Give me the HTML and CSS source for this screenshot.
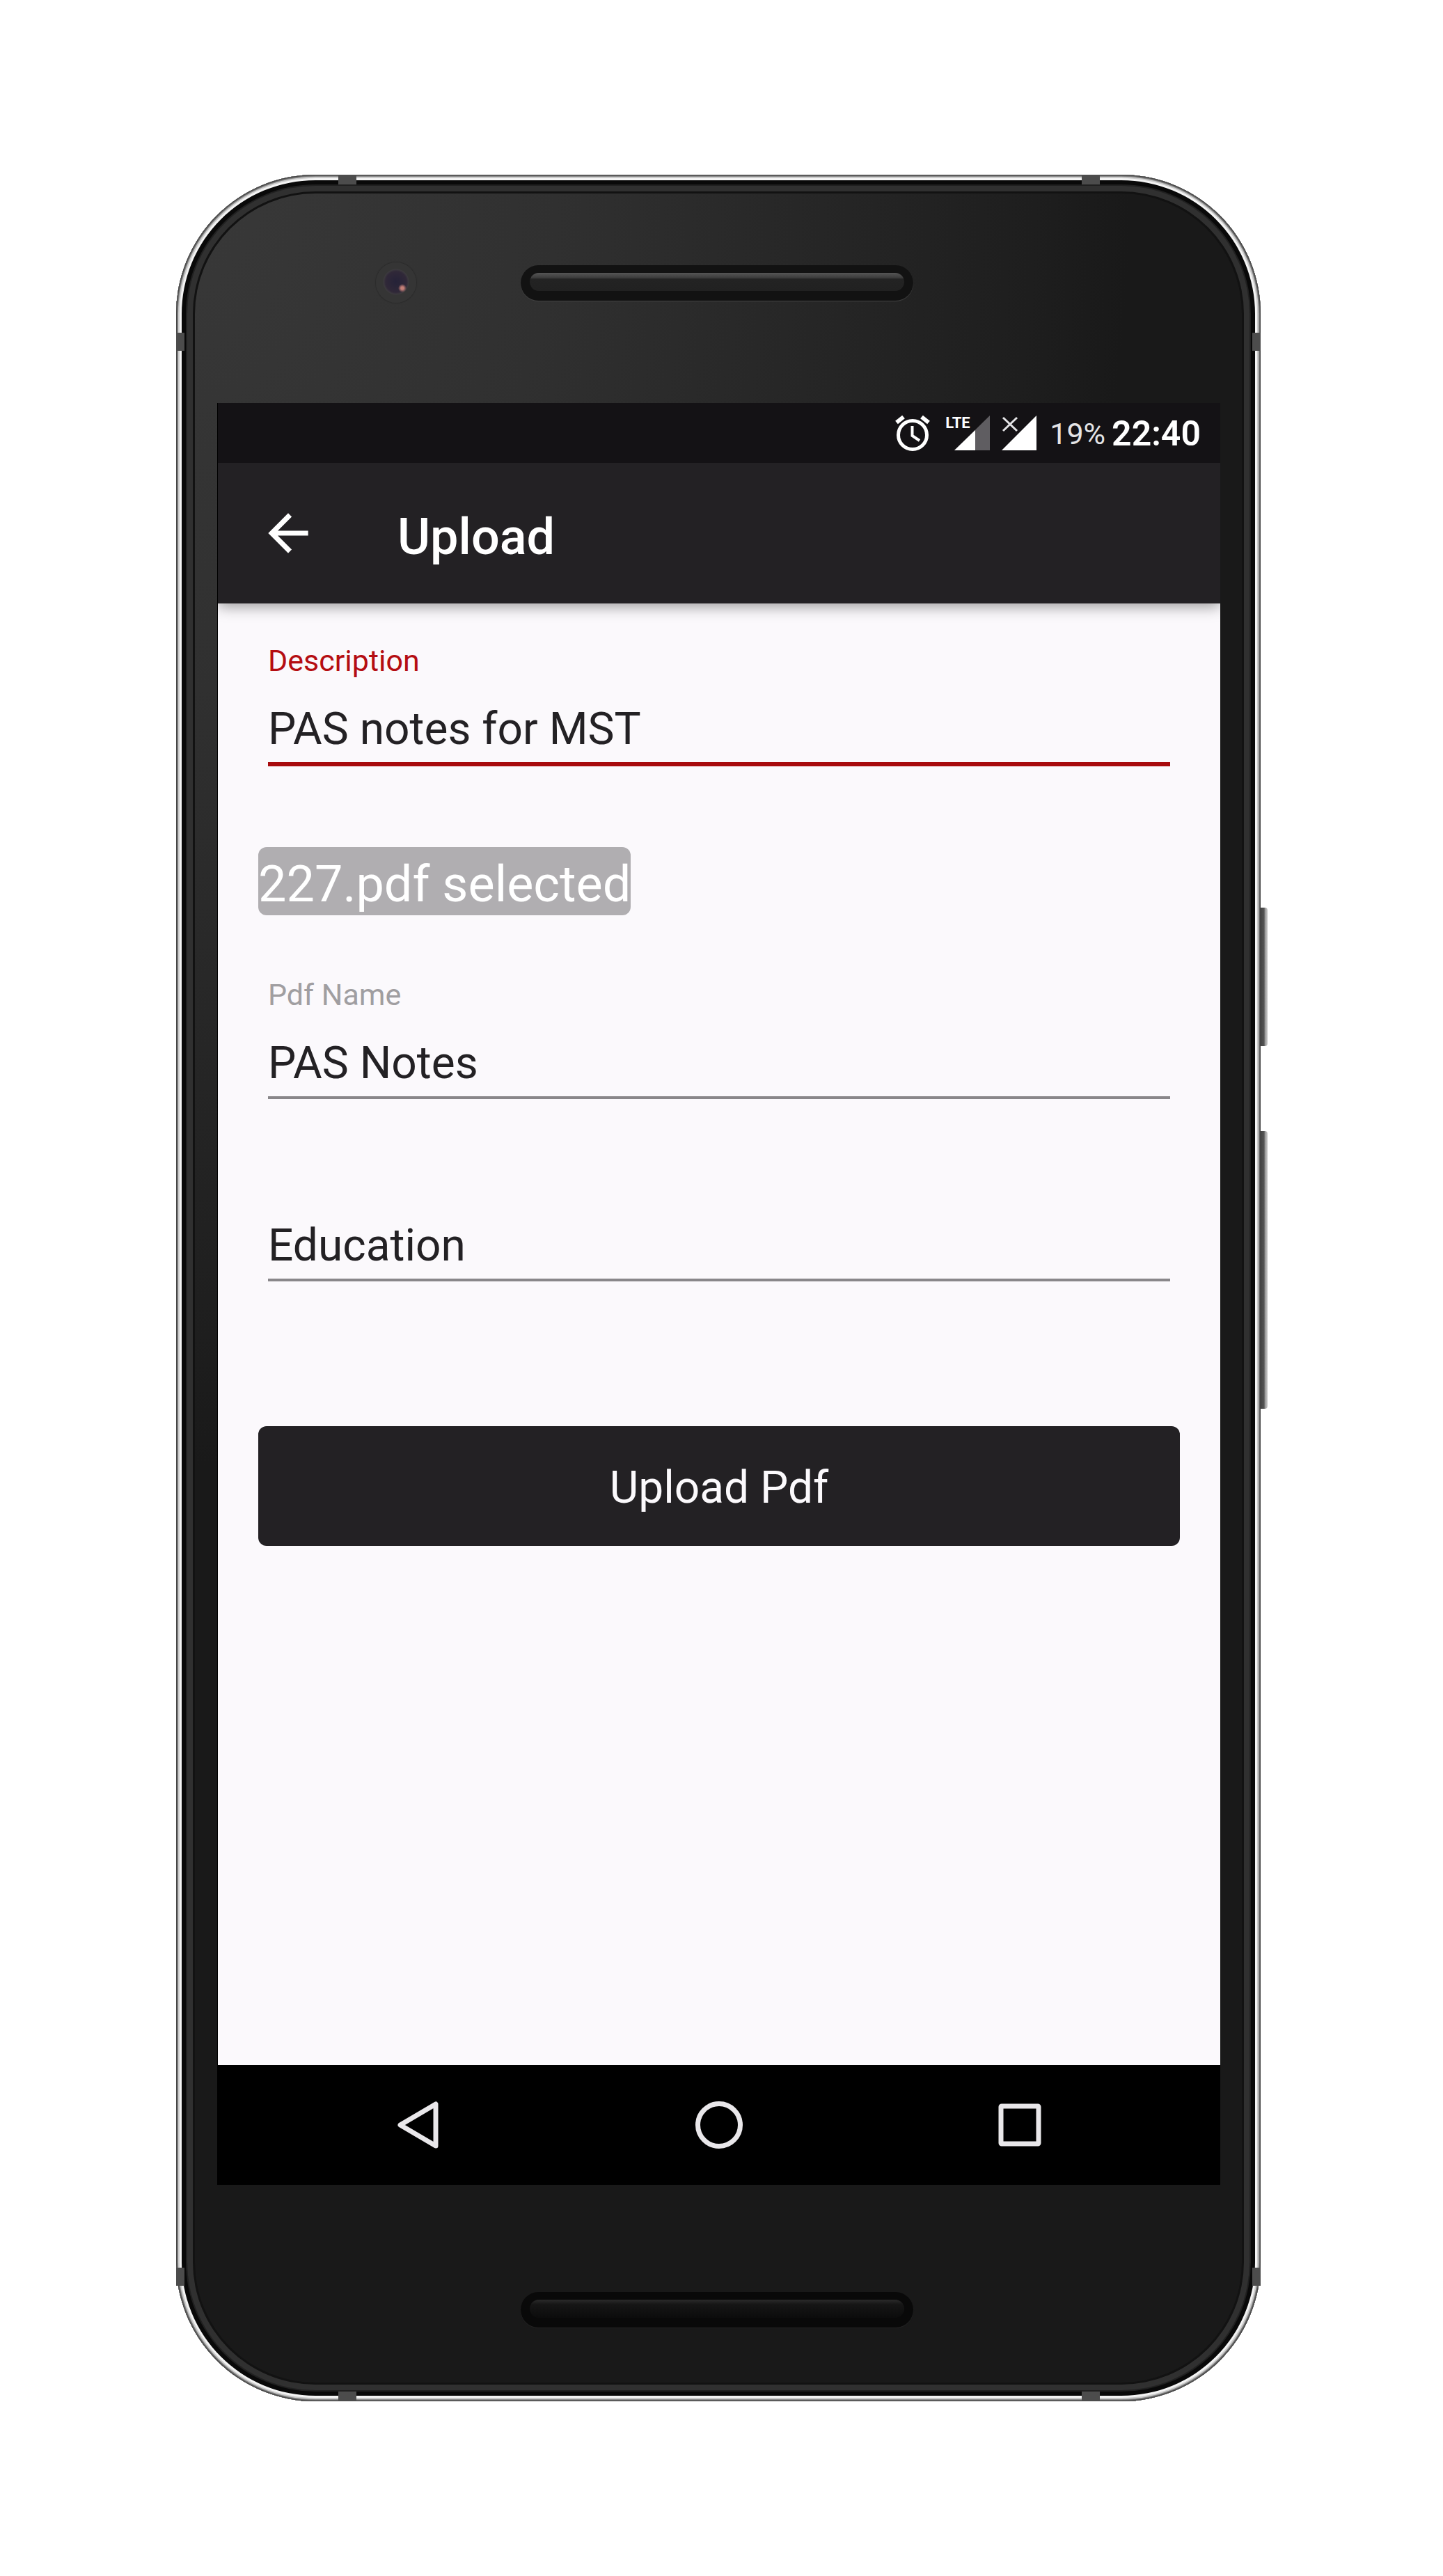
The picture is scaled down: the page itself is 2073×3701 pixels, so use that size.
FILE: index.html
```html
<!DOCTYPE html>
<html lang="en">
<head>
<meta charset="utf-8">
<meta name="viewport" content="width=device-width, initial-scale=1">
<title>Upload</title>
<link rel="stylesheet" href="styles.css">
</head>
<body>
<div class="device">
  <span class="band band-top band-start"></span>
  <span class="band band-top band-end"></span>
  <span class="band band-bottom band-start"></span>
  <span class="band band-bottom band-end"></span>
  <span class="band-side side-left side-upper"></span>
  <span class="band-side side-right side-upper"></span>
  <span class="band-side side-left side-lower"></span>
  <span class="band-side side-right side-lower"></span>
  <span class="key key-power"></span>
  <span class="key key-volume"></span>

  <div class="bezel bezel-top">
    <span class="camera"></span>
    <div class="speaker"><div class="speaker-bar"></div></div>
  </div>

  <div class="screen">
    <div class="status">
      <svg class="alarm" viewBox="0 0 50 52" aria-hidden="true">
        <g fill="none" stroke="#fff">
          <circle cx="25" cy="29" r="20.500" stroke-width="5"/>
          <path d="M2 11 12 3M48 11 38 3" stroke-width="6"/>
          <path d="M24.500 16V30L35 37" stroke-width="4"/>
        </g>
      </svg>
      <span class="signal">
        <svg viewBox="0 0 64 50" aria-hidden="true">
          <path d="M64 0V50H13Z" fill="#5f5d61"/>
          <path d="M43 21V50H13Z" fill="#fff"/>
        </svg>
        <span class="lte">LTE</span>
      </span>
      <svg class="nosim" viewBox="0 0 50 50" aria-hidden="true">
        <path d="M50 0V50H0Z" fill="#fff"/>
        <path d="M2 3 22 22M22 3 2 22" stroke="#e4e4e6" stroke-width="3" fill="none"/>
      </svg>
      <span class="battery">19%</span>
      <span class="clock">22:40</span>
    </div>

    <header class="appbar">
      <button class="back" type="button" aria-label="Back">
        <svg viewBox="0 0 24 24" aria-hidden="true"><path fill="#fff" d="M20 11H7.830l5.590-5.590L12 4l-8 8 8 8 1.410-1.410L7.830 13H20v-2z"/></svg>
      </button>
      <h1 class="title">Upload</h1>
    </header>

    <form class="form">
      <div class="field field-active">
        <label for="description">Description</label>
        <input id="description" type="text" value="PAS notes for MST">
      </div>
      <button class="chip" type="button">227.pdf selected</button>
      <div class="field">
        <label for="pdf-name">Pdf Name</label>
        <input id="pdf-name" type="text" value="PAS Notes">
      </div>
      <div class="field field-category">
        <input type="text" aria-label="Category" value="Education">
      </div>
      <button class="submit" type="button">Upload Pdf</button>
    </form>

    <nav class="navbar">
      <button type="button" aria-label="Back"><svg viewBox="0 0 72 72" aria-hidden="true"><path d="M10 36 61 6V66Z" stroke-linejoin="round"/></svg></button>
      <button type="button" aria-label="Home"><svg viewBox="0 0 72 72" aria-hidden="true"><circle cx="36" cy="36" r="30.500"/></svg></button>
      <button type="button" aria-label="Recent apps"><svg viewBox="0 0 72 72" aria-hidden="true"><rect x="9" y="9" width="54" height="54" rx="1"/></svg></button>
    </nav>
  </div>

  <div class="bezel bezel-bottom">
    <div class="speaker speaker-dim"><div class="speaker-bar"></div></div>
  </div>
</div>
</body>
</html>
```
FILE: styles.css
```css
* { box-sizing: border-box; }

body {
  margin: 0;
  padding: 251px 262px 251px 253px;
  background: #fff;
  font-family: Roboto, "Noto Sans", sans-serif;
}

button, input { font-family: inherit; margin: 0; }
button { padding: 0; border: 0; cursor: pointer; }
svg { display: block; }

/* Phone body: metal rim, black groove, glass edge */
.device {
  position: relative;
  padding: 0 58px 0 60px;
  border-radius: 200px;
  background: radial-gradient(ellipse 88% 58% at 0 0, #393939, #303030 40%, #1e1e1e 90%, #191919);
  box-shadow:
    inset 0 0 0 1px #444,
    inset 0 0 0 2px #666,
    inset 0 0 0 3px #888,
    inset 0 0 0 5px #ccc,
    inset 0 0 0 8px #f4f4f4,
    inset 0 0 0 14px #090909,
    inset 0 0 0 16px #202020,
    inset 0 0 0 24px #303030,
    inset 0 0 0 27px #121212;
}

.bezel { position: relative; display: flex; justify-content: center; align-items: flex-start; }
.bezel-top { height: 328px; padding: 130px 6px 0 0; }
.bezel-bottom { height: 311px; padding: 154px 6px 0 0; }

.speaker {
  width: 564px;
  height: 51px;
  padding: 11px 13px;
  border-radius: 26px;
  background: #121212;
  box-shadow: 0 1px 1px #444;
}
.speaker-bar {
  height: 26px;
  border-radius: 13px;
  background: linear-gradient(#555, #3c3c3c 7px, #232323 9px, #212121);
}
.speaker-dim { background: #090909; box-shadow: 0 1px 1px #252525; }
.speaker-dim .speaker-bar { background: linear-gradient(#2a2a2a, #151515 7px, #0c0c0c); }

.camera {
  position: absolute;
  left: 227px;
  top: 126px;
  width: 58px;
  height: 58px;
  border-radius: 50%;
  background:
    radial-gradient(circle at 38px 37px, #c58078 0 2px, transparent 6px),
    radial-gradient(circle at 29px 28px, #252238 0, #302838 15px, #3c3a3e 18px, #353535 19px);
  box-shadow: 0 0 1px 1px #2b2b2b;
}

.band, .band-side { position: absolute; background: #4c4c4c; }
.band { width: 26px; height: 14px; }
.band-top { top: 0; }
.band-bottom { bottom: 0; }
.band-start { left: 233px; }
.band-end { right: 231px; }
.band-side { width: 12px; height: 26px; }
.side-left { left: 0; }
.side-right { right: 0; }
.side-upper { top: 227px; }
.side-lower { bottom: 166px; }

.key {
  position: absolute;
  right: -10px;
  width: 10px;
  border-radius: 0 4px 4px 0;
  background: linear-gradient(90deg, #444, #555 50%, #999 65%, #ccc);
}
.key-power { top: 1053px; height: 199px; }
.key-volume { top: 1374px; height: 399px; }

.screen { background: #fbf9fc; box-shadow: -1px 0 0 #000; }

.status {
  display: flex;
  align-items: center;
  justify-content: flex-end;
  height: 86px;
  padding-right: 28px;
  background: #141215;
  color: #fff;
}
.alarm { width: 50px; height: 52px; margin-right: 22px; }
.signal { position: relative; margin-right: 17px; }
.signal svg { width: 64px; height: 50px; }
.lte {
  position: absolute;
  left: 0;
  top: 0;
  font: bold 22px/22px "Liberation Sans Narrow", Roboto, sans-serif;
}
.nosim { width: 50px; height: 50px; margin-right: 19px; }
.battery { margin-right: 9px; padding-top: 2px; font-size: 43px; color: #e4e4e6; }
.clock { padding-top: 2px; font-size: 50px; font-weight: 600; }

.appbar {
  position: relative;
  display: flex;
  align-items: center;
  gap: 114px;
  height: 202px;
  padding: 0 58px;
  background: #232124;
  box-shadow: 0 4px 20px rgba(0, 0, 0, 0.4);
  clip-path: inset(0 0 -40px 0);
}
.back { background: none; }
.back svg { width: 86px; height: 86px; }
.title { margin: 0; padding-top: 10px; font-size: 72px; font-weight: 500; color: #fff; }

.form {
  display: flex;
  flex-direction: column;
  align-items: stretch;
  min-height: 2100px;
  padding: 57px 58px;
}
.field { display: flex; flex-direction: column; gap: 35px; margin: 0 14px; }
.field label { font-size: 43px; line-height: 50px; color: #a09ea1; }
.field input {
  width: 100%;
  height: 90px;
  padding: 0 0 10px;
  border: 0;
  border-bottom: 4px solid #89878a;
  border-radius: 0;
  outline: 0;
  background: none;
  font-size: 64px;
  line-height: 76px;
  color: #232124;
}
.field-active label { color: #b50d12; }
.field-active input { height: 92px; border-bottom: 6px solid #a80b0e; }
.field-category { margin-top: 172px; }

.chip {
  align-self: flex-start;
  height: 98px;
  margin: 116px 0 89px;
  padding-top: 8px;
  border-radius: 12px;
  background: #b0aeb1;
  font-size: 72px;
  color: #fff;
}

.submit {
  height: 172px;
  margin-top: 208px;
  padding-top: 4px;
  border-radius: 12px;
  background: #232124;
  font-size: 64px;
  color: #fbf9fc;
}

.navbar { display: flex; height: 172px; padding: 0 72px; background: #000; }
.navbar button { flex: 1; display: flex; align-items: center; justify-content: center; background: none; }
.navbar svg { width: 72px; height: 72px; fill: none; stroke: #e9e7ea; stroke-width: 7px; }
```
